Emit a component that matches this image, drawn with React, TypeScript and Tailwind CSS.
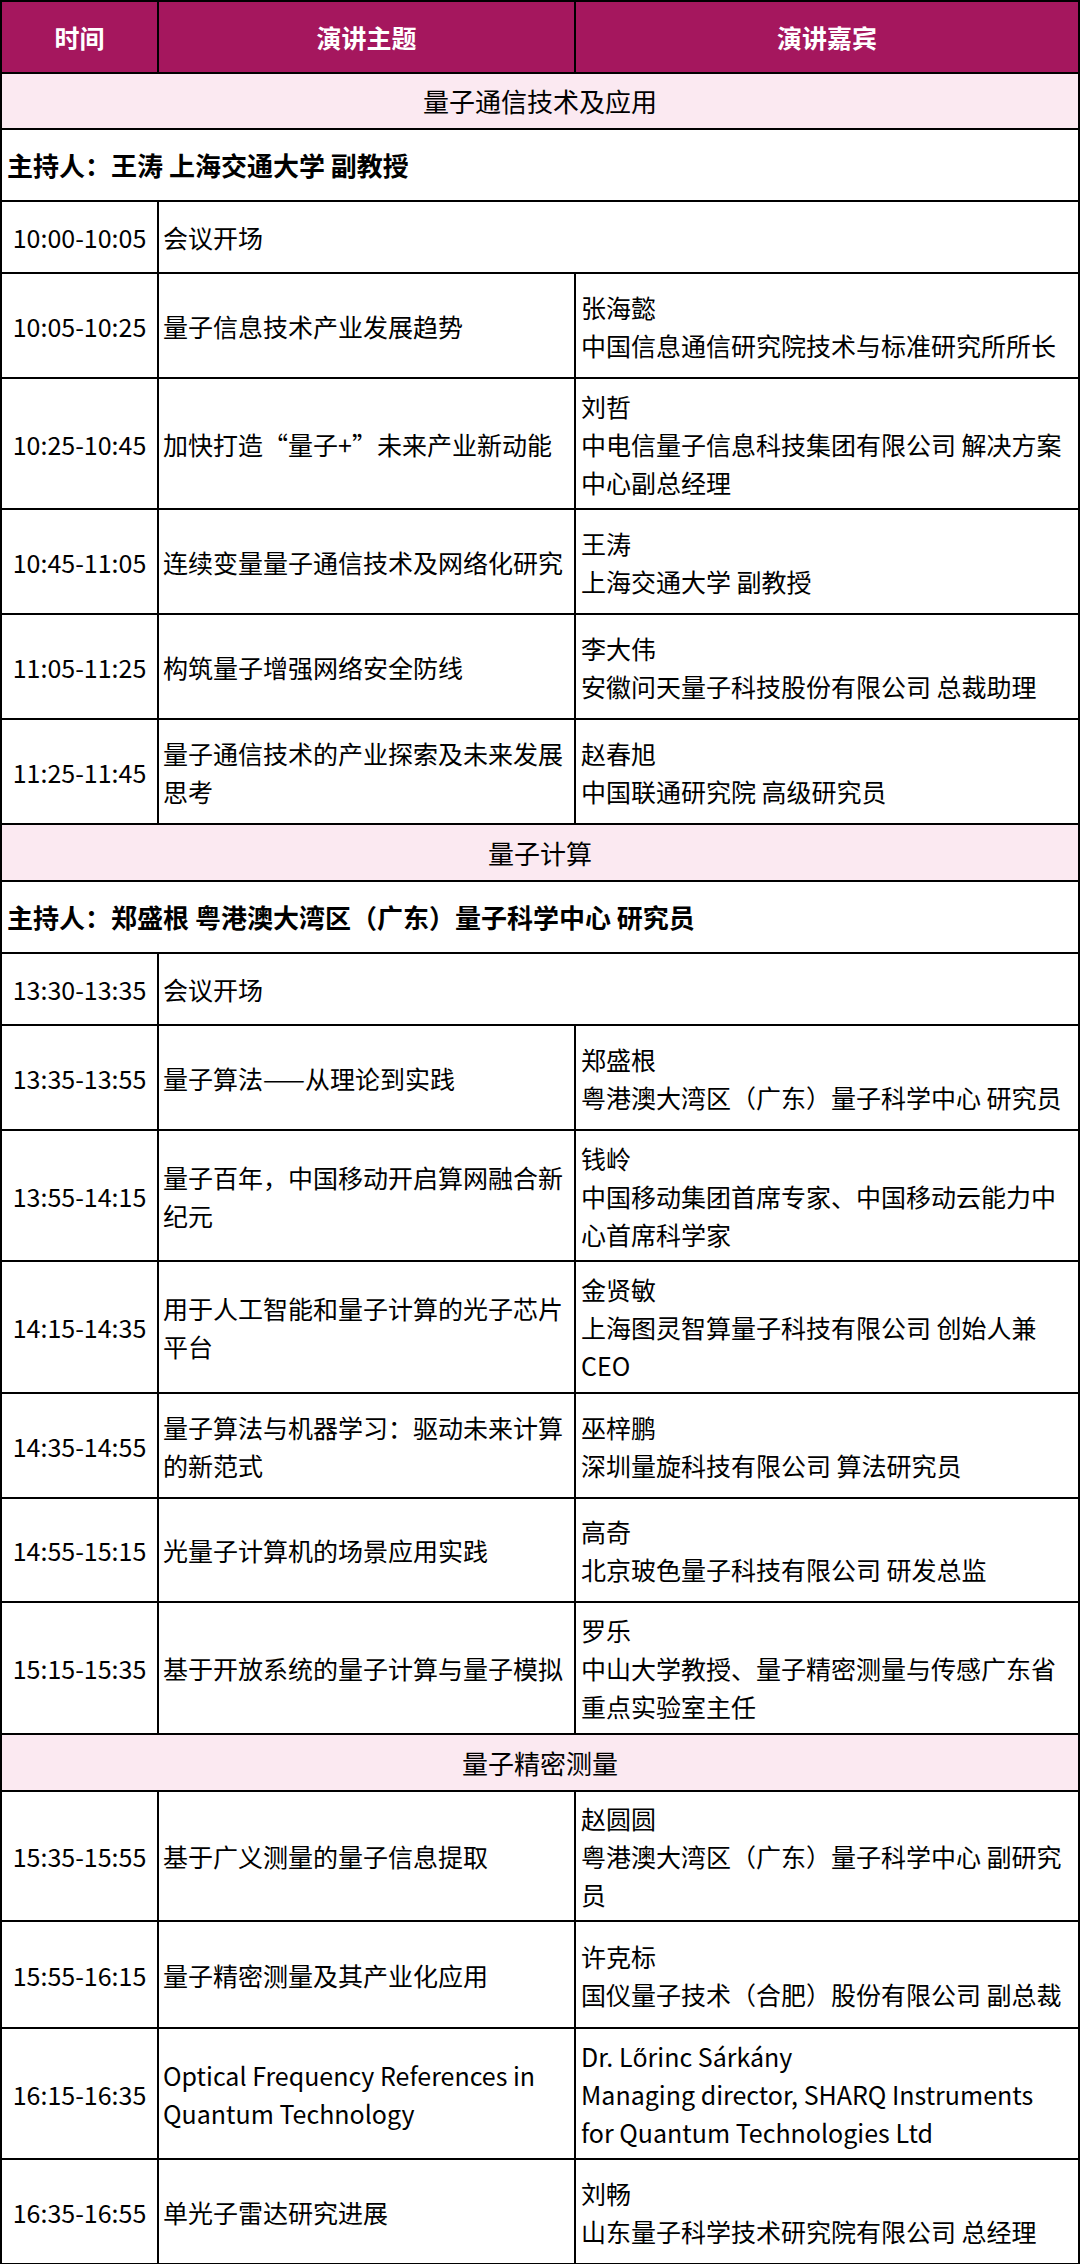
const font = { fontFamily: '"Noto Sans CJK SC", "Noto Sans", sans-serif' };

type Row =
  | { kind: "section"; title: string; h: string }
  | { kind: "host"; text: string }
  | { kind: "open"; time: string; topic: string }
  | { kind: "talk"; time: string; topic: string; name: string; org: string; h: string };

const rows: Row[] = [
  { kind: "section", title: "量子通信技术及应用", h: "h-[56px]" },
  { kind: "host", text: "主持人：王涛 上海交通大学 副教授" },
  { kind: "open", time: "10:00-10:05", topic: "会议开场" },
  { kind: "talk", time: "10:05-10:25", topic: "量子信息技术产业发展趋势", name: "张海懿", org: "中国信息通信研究院技术与标准研究所所长", h: "h-[105px]" },
  { kind: "talk", time: "10:25-10:45", topic: "加快打造“量子+”未来产业新动能", name: "刘哲", org: "中电信量子信息科技集团有限公司 解决方案中心副总经理", h: "h-[131px]" },
  { kind: "talk", time: "10:45-11:05", topic: "连续变量量子通信技术及网络化研究", name: "王涛", org: "上海交通大学 副教授", h: "h-[105px]" },
  { kind: "talk", time: "11:05-11:25", topic: "构筑量子增强网络安全防线", name: "李大伟", org: "安徽问天量子科技股份有限公司 总裁助理", h: "h-[105px]" },
  { kind: "talk", time: "11:25-11:45", topic: "量子通信技术的产业探索及未来发展思考", name: "赵春旭", org: "中国联通研究院 高级研究员", h: "h-[105px]" },
  { kind: "section", title: "量子计算", h: "h-[57px]" },
  { kind: "host", text: "主持人：郑盛根 粤港澳大湾区（广东）量子科学中心 研究员" },
  { kind: "open", time: "13:30-13:35", topic: "会议开场" },
  { kind: "talk", time: "13:35-13:55", topic: "量子算法——从理论到实践", name: "郑盛根", org: "粤港澳大湾区（广东）量子科学中心 研究员", h: "h-[105px]" },
  { kind: "talk", time: "13:55-14:15", topic: "量子百年，中国移动开启算网融合新纪元", name: "钱岭", org: "中国移动集团首席专家、中国移动云能力中心首席科学家", h: "h-[131px]" },
  { kind: "talk", time: "14:15-14:35", topic: "用于人工智能和量子计算的光子芯片平台", name: "金贤敏", org: "上海图灵智算量子科技有限公司 创始人兼CEO", h: "h-[132px]" },
  { kind: "talk", time: "14:35-14:55", topic: "量子算法与机器学习：驱动未来计算的新范式", name: "巫梓鹏", org: "深圳量旋科技有限公司 算法研究员", h: "h-[105px]" },
  { kind: "talk", time: "14:55-15:15", topic: "光量子计算机的场景应用实践", name: "高奇", org: "北京玻色量子科技有限公司 研发总监", h: "h-[104px]" },
  { kind: "talk", time: "15:15-15:35", topic: "基于开放系统的量子计算与量子模拟", name: "罗乐", org: "中山大学教授、量子精密测量与传感广东省重点实验室主任", h: "h-[132px]" },
  { kind: "section", title: "量子精密测量", h: "h-[57px]" },
  { kind: "talk", time: "15:35-15:55", topic: "基于广义测量的量子信息提取", name: "赵圆圆", org: "粤港澳大湾区（广东）量子科学中心 副研究员", h: "h-[130px]" },
  { kind: "talk", time: "15:55-16:15", topic: "量子精密测量及其产业化应用", name: "许克标", org: "国仪量子技术（合肥）股份有限公司 副总裁", h: "h-[107px]" },
  { kind: "talk", time: "16:15-16:35", topic: "Optical Frequency References in Quantum Technology", name: "Dr. Lőrinc Sárkány", org: "Managing director, SHARQ Instruments for Quantum Technologies Ltd", h: "h-[131px]" },
  { kind: "talk", time: "16:35-16:55", topic: "单光子雷达研究进展", name: "刘畅", org: "山东量子科学技术研究院有限公司 总经理", h: "h-[105px]" },
];

const cell = "border-2 border-black align-middle";

function TableRow({ row }: { row: Row }) {
  if (row.kind === "section") {
    return (
      <tr className={row.h}>
        <td colSpan={3} className={`${cell} bg-[#fbe9f1] text-center text-[26px]`}>
          {row.title}
        </td>
      </tr>
    );
  }
  if (row.kind === "host") {
    return (
      <tr className="h-[72px]">
        <td colSpan={3} className={`${cell} px-[5px] font-bold text-[26px]`}>
          {row.text}
        </td>
      </tr>
    );
  }
  if (row.kind === "open") {
    return (
      <tr className="h-[72px]">
        <td className={`${cell} text-center whitespace-nowrap`}>{row.time}</td>
        <td colSpan={2} className={`${cell} px-[4px]`}>
          {row.topic}
        </td>
      </tr>
    );
  }
  return (
    <tr className={row.h}>
      <td className={`${cell} text-center whitespace-nowrap`}>{row.time}</td>
      <td className={`${cell} pl-[4px] pr-[2px]`}>{row.topic}</td>
      <td className={`${cell} pl-[5px] pr-[12px]`}>
        <div>{row.name}</div>
        <div>{row.org}</div>
      </td>
    </tr>
  );
}

export default function App() {
  return (
    <div className="w-[1080px] bg-white text-black text-[25px] leading-[38px]" style={font}>
      <table className="w-full table-fixed border-collapse">
        <colgroup>
          <col className="w-[157px]" />
          <col className="w-[417px]" />
          <col />
        </colgroup>
        <thead>
          <tr className="h-[72px] bg-[#a5175e] text-white">
            <th className={`${cell} font-bold`}>时间</th>
            <th className={`${cell} font-bold`}>演讲主题</th>
            <th className={`${cell} font-bold`}>演讲嘉宾</th>
          </tr>
        </thead>
        <tbody>
          {rows.map((row, i) => (
            <TableRow key={i} row={row} />
          ))}
        </tbody>
      </table>
    </div>
  );
}
